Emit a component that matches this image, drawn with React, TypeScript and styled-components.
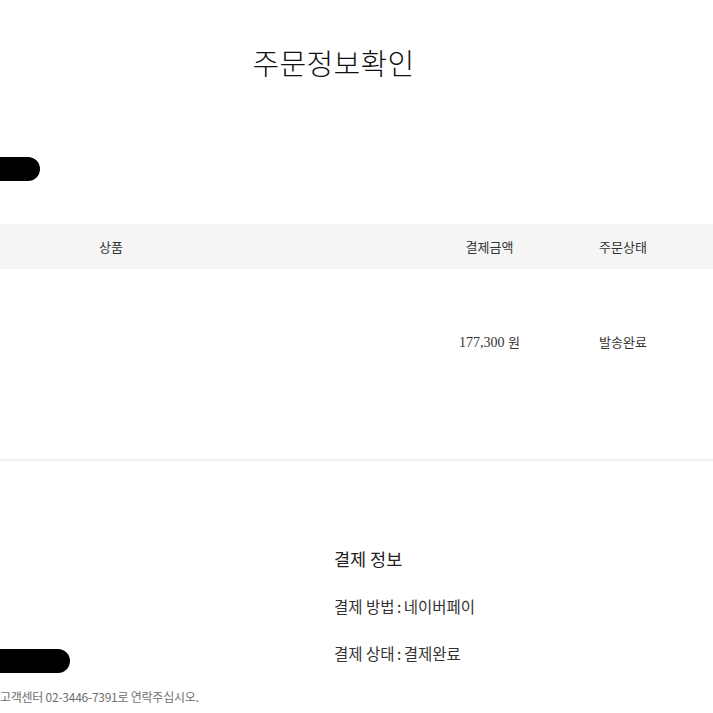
import React from "react";
import styled, { createGlobalStyle } from "styled-components";

const GlobalStyle = createGlobalStyle`
  html, body {
    margin: 0;
    padding: 0;
    background: #ffffff;
  }
  body {
    font-family: "Noto Sans CJK KR", "Noto Sans", sans-serif;
    color: #222;
  }
`;

const Page = styled.div`
  width: 713px;
  height: 713px;
  overflow: hidden;
  display: flex;
  flex-direction: column;
`;

const Title = styled.h1`
  margin: 45px 46px 0 0;
  text-align: center;
  font-size: 29px;
  font-weight: 300;
  line-height: 34px;
  color: #111;
  letter-spacing: 0.3px;
`;

interface IRedaction {
  width: number;
}
const Redaction = styled.div<IRedaction>`
  width: ${(props) => props.width}px;
  height: 24px;
  background: #000;
  border-radius: 0 12px 12px 0;
  filter: blur(0.6px);
`;

const LowRedaction = styled(Redaction)`
  margin-bottom: -8px;
`;

const NameRow = styled.div`
  margin-top: 78px;
`;

const TableHead = styled.div`
  margin-top: 43px;
  height: 45px;
  background: #f5f5f5;
  display: grid;
  grid-template-columns: 222px 201px 133px 134px 1fr;
  align-items: center;
`;

const TableRow = styled.div`
  height: 191px;
  box-sizing: border-box;
  padding-top: 63px;
  display: grid;
  grid-template-columns: 222px 201px 133px 134px 1fr;
  align-items: start;
  border-bottom: 1px solid #ebebeb;
  box-shadow: 0 2px 0 #f7f7f7;
`;

interface ICell {
  serif?: boolean;
}
const HeadCell = styled.div`
  text-align: center;
  font-size: 13px;
  color: #333;
`;

const Cell = styled.div<ICell>`
  text-align: center;
  font-size: ${(props) => (props.serif ? "14px" : "13px")};
  line-height: 20px;
  color: #333;
  font-family: ${(props) =>
    props.serif
      ? `"Liberation Serif", "Noto Sans CJK KR", serif`
      : `"Noto Sans CJK KR", sans-serif`};
`;

const Won = styled.span`
  font-family: "Noto Sans CJK KR", sans-serif;
  font-size: 13px;
`;

const PaymentArea = styled.div`
  display: flex;
  margin-top: 87px;
`;

const LeftCol = styled.div`
  width: 334px;
  display: flex;
  flex-direction: column;
  justify-content: flex-end;
`;

const InfoList = styled.div`
  display: flex;
  flex-direction: column;
  gap: 23px;
`;

const InfoTitle = styled.div`
  font-size: 17.5px;
  line-height: 24px;
  color: #222;
`;

const InfoLine = styled.div`
  font-size: 15.5px;
  line-height: 24px;
  color: #333;
`;

const Colon = styled.span`
  margin: 0 -1px;
`;

const Footer = styled.div`
  margin-top: 24px;
  font-size: 12px;
  line-height: 16px;
  color: #6f6f6f;
  letter-spacing: -0.25px;
`;

export default function App() {
  return (
    <Page>
      <GlobalStyle />
      <Title>주문정보확인</Title>
      <NameRow>
        <Redaction width={40} />
      </NameRow>
      <TableHead>
        <HeadCell>상품</HeadCell>
        <div />
        <HeadCell>결제금액</HeadCell>
        <HeadCell>주문상태</HeadCell>
        <div />
      </TableHead>
      <TableRow>
        <Cell />
        <Cell />
        <Cell serif>
          177,300 <Won>원</Won>
        </Cell>
        <Cell>발송완료</Cell>
        <Cell />
      </TableRow>
      <PaymentArea>
        <LeftCol>
          <LowRedaction width={70} />
        </LeftCol>
        <InfoList>
          <InfoTitle>결제 정보</InfoTitle>
          <InfoLine>
            결제 방법<Colon> : </Colon>네이버페이
          </InfoLine>
          <InfoLine>
            결제 상태<Colon> : </Colon>결제완료
          </InfoLine>
        </InfoList>
      </PaymentArea>
      <Footer>고객센터 02-3446-7391로 연락주십시오.</Footer>
    </Page>
  );
}
